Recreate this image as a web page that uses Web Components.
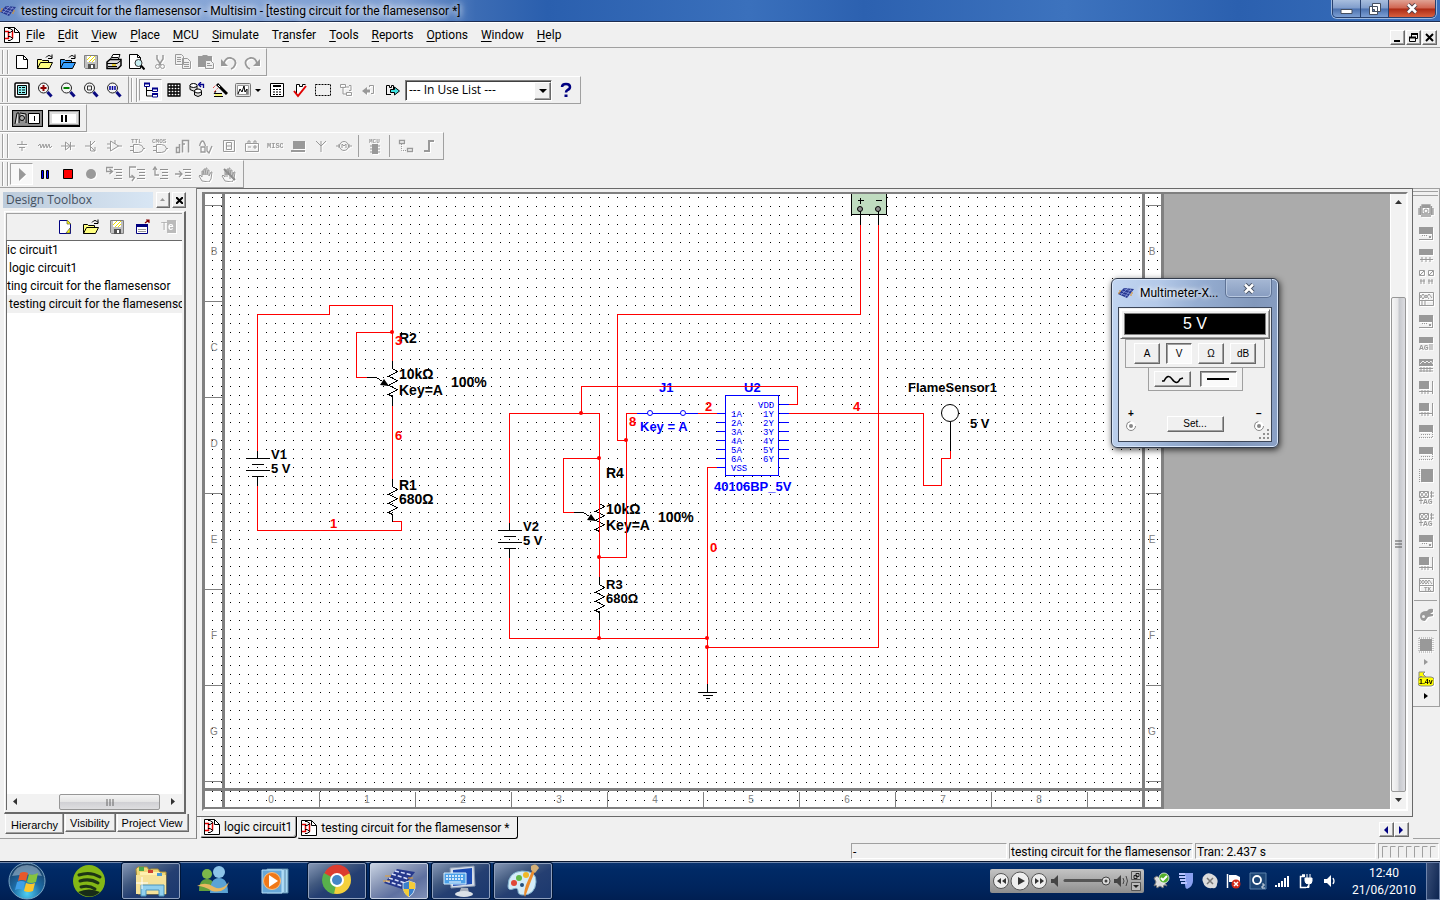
<!DOCTYPE html>
<html lang="en">
<head>
<meta charset="utf-8">
<title>testing circuit for the flamesensor - Multisim</title>
<style>
	html, body { height: 100%; margin: 0; }
	body {
		display: flex;  flex-direction: column;
		background: #f0f0f0;
		color: #000;
		font: 12px/16px Roboto, "Liberation Sans", sans-serif;
		overflow: hidden;
	}
	main { display: flex;  flex: 1;  min-height: 0; }
	.toolbars { display: flex;  flex-direction: column; }
	.toolbars > div { display: flex; }
	.documents { display: flex;  flex-direction: column;  flex: 1;  min-width: 0;  border-left: 1px solid #808080; }
</style>
</head>
<body>

<title-bar>testing circuit for the flamesensor - Multisim - [testing circuit for the flamesensor *]</title-bar>
<menu-bar></menu-bar>

<div class="toolbars">
	<div><tool-bar label="Standard" icons="new open openBlue save print preview cut- copy- paste- undo- redo-"></tool-bar></div>
	<div>
		<tool-bar label="View" icons="fit zoomIn zoomOut zoomArea zoomFull"></tool-bar>
		<tool-bar label="Main" icons="tree! grid database wizard graph&gt; calc check area back- left- right">
			<in-use-list></in-use-list>
			<tool-button icon="help" label="Help"></tool-button>
		</tool-bar>
	</div>
	<div><tool-bar label="Simulation switch"><sim-switch></sim-switch></tool-bar></div>
	<div><tool-bar label="Components" icons="source- resistor- diode- transistor- opamp- ttl- cmos- digital- mixed- indicator- power- misc- advanced- rf- motor- | mcu- | hier- bus-"></tool-bar></div>
	<div><tool-bar label="Simulation" icons="play!- pause stop record- stepInto- stepOver- stepOut- runTo- hand- handOff-"></tool-bar></div>
</div>

<main>
	<design-toolbox></design-toolbox>
	<div class="documents">
		<sheet-view>
			<circuit-sheet></circuit-sheet>
			<multimeter-window slot="floating"></multimeter-window>
		</sheet-view>
		<document-tabs></document-tabs>
	</div>
	<instrument-bar></instrument-bar>
</main>

<status-bar></status-bar>
<task-bar></task-bar>

<script>

/* Drawings for the 16x16 icons. */
const folder = (fill) => `<path d="M.5 14.500v-9h4l1 1h6v2M.5 14.500l3-6h12l-3 6z" fill="${fill}" stroke="#000"/><path d="M9 3.500q3-4 6 0m0-3v4h-4" fill="none" stroke="#000"/>`;
const lens = (inner) => `<circle cx="6.500" cy="6" r="5" fill="#f4f4f4" stroke="#222"/><path d="M10.500 10l4 4.500" stroke="#0a0a80" stroke-width="3"/>${inner}`;
const lines = `<path d="M8 3.500h8M10 6.500h6M10 9.500h6M8 12.500h8" stroke="#909090"/>`;
const gate = `<path d="M4.500 6.500h5q4 0 5 4-1 4-5 4h-5zM1 8.500h3M1 12.500h3M14 10.500h2" fill="none" stroke="#999"/>`;
const hand = `<path d="M4 15L1 10l1-1 2 2V5h1v4l1-6h1v6l1-7h1v7l1-5h1v6l2-4h1l-1 7-2 3z" fill="#f6f6f6" stroke="#999"/>`;
const sheetIcon = `<path d="M.5 .5h10l5 5v10h-15z" fill="#fff" stroke="#000"/><path d="M10.500 .5v5h5" fill="none" stroke="#000"/><path d="M1 4.500h3.500v7H1M8.500 3.500v8" fill="none" stroke="#e00000" stroke-width="1.500"/><path d="M4 1.500h2l3 2-3 2H4M4 9.500h2l3 2-3 2H4" fill="none" stroke="#000"/>`;
const logo = `<path d="M0 9l6-6 10 1-7 9z" fill="#25368f"/><path d="M2 8l8 3M4 6l8 3M6 4l8 2M10 3L3 10M13 4l-6 8" stroke="#8fa0e0" stroke-width=".7"/><path d="M0 8h2M1 6h2M13 8h2M12 10h2" stroke="#e09020"/>`;

const ICONS = {
	logo: logo,
	sheet: sheetIcon,
	new: `<path d="M2.500 1.500h7l4 4v9h-11z" fill="#fff" stroke="#000"/><path d="M9.500 1.500v4h4" fill="none" stroke="#000"/>`,
	newYellow: `<path d="M2.500 1.500h8l3 3v10h-11z" fill="#fff" stroke="#000080"/><path d="M10 1v4h4M13 9v5H9z" fill="#ff0" stroke="#555" stroke-width=".7"/>`,
	open: folder('#ffff80'),
	openBlue: folder('#38a0ff'),
	save: `<path d="M1.500 1.500h13v13h-12l-1-1z" fill="#c0c0c0" stroke="#808080"/><path d="M4 2h8v6H4z" fill="#fff"/><path d="M4 6l4-4M6 8l6-6M9 8l3-3" stroke="#f0e000"/><path d="M5 10h7v5H5z" fill="#555"/><path d="M8 11h2v3H8z" fill="#fff"/>`,
	print: `<path d="M4 6l3-5.500h7L12 6" fill="#fff" stroke="#000"/><path d="M6 3.500h6" stroke="#000"/><path d="M1 8l3-2.500h11v6l-3 3H1z" fill="#ddd" stroke="#000" stroke-width="1.500"/><path d="M1 9.500h10l4-3M2 12.500h9" fill="none" stroke="#000"/><path d="M6 11h4" stroke="#e0c000" stroke-width="1.500"/>`,
	preview: `<path d="M.5 .5h8l3 3v11h-11z" fill="#fff" stroke="#000"/><path d="M8.500 .5v3h3" fill="none" stroke="#000"/><circle cx="9.500" cy="9" r="3.500" fill="#c8eef2" stroke="#333"/><path d="M12 11.500l3.500 4" stroke="#000" stroke-width="2"/>`,
	cut: `<path d="M5 1v4l4 6M11 1v4L7 11" fill="none" stroke="#999" stroke-width="1.500"/><circle cx="5.500" cy="12.500" r="2" fill="none" stroke="#999"/><circle cx="10.500" cy="12.500" r="2" fill="none" stroke="#999"/>`,
	copy: `<path d="M.5 .5h6l2 2v8h-8z M7.500 4.500h5l3 3v7h-8z" fill="#f0f0f0" stroke="#999"/><path d="M2 3.500h4M2 5.500h4M2 7.500h4M9 8.500h5M9 10.500h5M9 12.500h5" stroke="#999"/>`,
	paste: `<path d="M0 2h4l1-1h4l1 1h4v11H0z" fill="#999"/><path d="M7.500 6.500h5l3 3v5h-8z" fill="#f0f0f0" stroke="#999"/><path d="M9 9.500h3M9 11.500h5" stroke="#999"/>`,
	undo: `<path d="M3 9Q5 3 10 4q6 2 4 7-1 3-4 4" fill="none" stroke="#999" stroke-width="1.800"/><path d="M0 5v7h7z" fill="#999"/>`,
	redo: `<path d="M13 9Q11 3 6 4 0 6 2 11q1 3 4 4" fill="none" stroke="#999" stroke-width="1.800"/><path d="M16 5v7H9z" fill="#999"/>`,
	fit: `<rect x="1" y="1" width="14" height="14" rx="1" fill="#fff" stroke="#000" stroke-width="1.500"/><path d="M3.500 3.500h9v9h-9z" fill="#8ef0f0" stroke="#000"/><path d="M5 5.500h2M8 5.500h3M5 8h2M8 8h3M5 10.500h2M8 10.500h3" stroke="#000"/>`,
	zoomIn: lens('<path d="M3.500 6h6M6.500 3v6" stroke="#900000" stroke-width="2"/>'),
	zoomOut: lens('<path d="M3.500 6h6" stroke="#008000" stroke-width="2"/>'),
	zoomArea: lens('<path d="M4.500 4h4v4h-4z" fill="none" stroke="#333"/>'),
	zoomFull: lens('<path d="M4 4v4M6.500 4v4M9 4v4" stroke="#0000a0" stroke-width="1.500"/>'),
	tree: `<path d="M3.500 5v9h6M3.500 8.500h6" fill="none" stroke="#000"/><path d="M1.500 1.500h5v3h-5zM9.500 6.500h5v3h-5zM9.500 12h5v3h-5z" fill="#fff" stroke="#00008b"/><path d="M1 1.500h6M9 6.500h6M9 12h6" stroke="#00008b" stroke-width="2"/>`,
	grid: `<path d="M2 2h12v12H2z" fill="#fff"/><path d="M1.500 2h13M1.500 5h13M1.500 8h13M1.500 11h13M1.500 14h13M2 2v12M5 2v12M8 2v12M11 2v12M14 2v12" stroke="#000" stroke-width="1.300"/>`,
	database: `<path d="M1 3.500v4q3.500 3 7 0v-4M5.500 9v4q3.500 3 7 0V9" fill="#ddd" stroke="#000"/><ellipse cx="4.500" cy="3.500" rx="3.500" ry="2" fill="#fff" stroke="#000"/><ellipse cx="9" cy="9" rx="3.500" ry="2" fill="#fff" stroke="#000"/><path d="M14.500 6V2.500h-4M12 0L9.500 2.500 12 5" fill="none" stroke="#00008b" stroke-width="1.300"/>`,
	wizard: `<path d="M5 2l10 10" stroke="#000" stroke-width="3"/><path d="M6 3l2 2" stroke="#fff"/><path d="M1 6l3-3M2 10l4-4" stroke="#d00" stroke-dasharray="1 1"/><path d="M2 11.500h8M2 14.500h9M2 12l2-3" stroke="#000"/><path d="M3 13h7" stroke="#ff0"/>`,
	graph: `<rect x=".5" y="1.500" width="15" height="13" rx="1" fill="#e4e4e4" stroke="#777"/><path d="M2.500 3.500h11v9h-11z" fill="#fff" stroke="#999"/><path d="M3 12l2-5 2 3 2-6 1 6 2-3v5" fill="none" stroke="#000"/>`,
	calc: `<path d="M1.500 1.500h13v13h-13z" fill="#fff" stroke="#000"/><path d="M4 4h8" stroke="#000" stroke-width="2"/><path d="M4 7.500h2M7 7.500h2M10 7.500h2M4 10h2M7 10h2M10 10h2M4 12.500h2M7 12.500h2M10 12.500h2" stroke="#000"/>`,
	check: `<path d="M4.500 13V2.500h3v2h3v-2h3" fill="#fff" stroke="#000"/><path d="M2 9l4 5L14 4" fill="none" stroke="#e00000" stroke-width="2"/>`,
	area: `<path d="M.5 2.500h15v11H.5z" fill="none" stroke="#000" stroke-dasharray="2 1"/>`,
	back: `<path d="M2.500 2.500h5v3h-5zM8.500 10.500h5v3h-5zM5 6v6h3M8 5h3M11 3.500h2v5h-2" fill="none" stroke="#999"/>`,
	left: `<path d="M1 9l5-4v2.500h3v3H6V13z" fill="#999"/><path d="M8.500 5V3.500h4v8H10" fill="none" stroke="#999"/>`,
	right: `<path d="M2.500 12V3.500h3v2h2v-2h2v4M2 12.500h5" fill="none" stroke="#000"/><path d="M6.500 7.500h4V5l5 4-5 4v-2.500h-4z" fill="#40e0e0" stroke="#000"/>`,
	help: `<path d="M4 5Q4 2 8 2q4 0 4 3 0 2-2.500 3-1.500 1-1.500 2.500" fill="none" stroke="#000080" stroke-width="2.500"/><path d="M6.500 12.500h3V15h-3z" fill="#000080"/>`,
	source: `<path d="M8 3v3M3 6.500h10M5 9.500h6M8 10v3" stroke="#999"/>`,
	resistor: `<path d="M1 8l2-2 1 4 2-4 1 4 2-4 1 4 2-4 1 4 2-2" fill="none" stroke="#999"/>`,
	diode: `<path d="M1 8h14M10.500 4v8M5.500 4v8l5-4z" fill="none" stroke="#999"/>`,
	transistor: `<path d="M2 8h5M7.500 3v10M8 7l4-4M8 9l4 4M12 9v4H8" fill="none" stroke="#999"/>`,
	opamp: `<path d="M4.500 3v10l8-5zM1 6h3M1 10h3M12 8h4M9 2v4" fill="none" stroke="#999"/>`,
	ttl: gate + `<text x="2" y="5" font-size="6" font-weight="bold" fill="#999">TTL</text>`,
	cmos: gate + `<text x="0" y="5" font-size="6" font-weight="bold" fill="#999">CMOS</text>`,
	digital: `<path d="M7.500 14.500v-12h6v12M4.500 9.500h-3v5h3zM4.500 14.500V6M8 6h2" fill="none" stroke="#999" stroke-width="1.500"/>`,
	mixed: `<path d="M1.500 8q3-10 6 0M3 9v5h4V9zM9 8v5l2 2 3-7" fill="none" stroke="#999" stroke-width="1.300"/>`,
	indicator: `<path d="M2.500 2.500h11v11h-11zM5.500 4.500h5v7h-5zM6 8h4" fill="none" stroke="#999"/>`,
	power: `<path d="M1.500 5.500h13v8h-13zM4 5V3h2v2M10 5V3h2v2M4 9h3M9 9h4M11 7v4" fill="none" stroke="#999"/>`,
	misc: `<text x="0" y="10" font-size="7" font-weight="bold" fill="#999">MISC</text>`,
	advanced: `<path d="M3 3h12v8H3zM1 12h14v2H1z" fill="#999"/>`,
	rf: `<path d="M8 14V8L3 3M8 8V3M8 8l5-5" fill="none" stroke="#999"/>`,
	motor: `<circle cx="8" cy="8" r="4.500" fill="none" stroke="#999"/><path d="M0 8h3M13 8h3M6 10V6l2 2 2-2v4M3 6v4M13 6v4" fill="none" stroke="#999"/>`,
	mcu: `<text x="2" y="5" font-size="6" font-weight="bold" fill="#999">MCU</text><path d="M5 6h6v10H5z" fill="#999"/><path d="M3 8h10M3 11h10M3 14h10" stroke="#999"/>`,
	hier: `<path d="M1.500 2.500h5v3h-5zM9.500 10.500h5v3h-5z" fill="none" stroke="#999" stroke-width="1.300"/><path d="M3.500 6v6.500h6" fill="none" stroke="#999" stroke-dasharray="1 1"/>`,
	bus: `<path d="M3 13h5V3h5" fill="none" stroke="#999" stroke-width="2"/>`,
	play: `<path d="M5 2v13l7-6.500z" fill="#999"/>`,
	pause: `<path d="M4.500 4.500h2v8h-2zM9.500 4.500h2v8h-2z" fill="#00f" stroke="#000"/>`,
	stop: `<path d="M3.500 3.500h9v9h-9z" fill="#f00" stroke="#000"/>`,
	record: `<circle cx="8" cy="8" r="5" fill="#999"/>`,
	stepInto: lines + `<path d="M7 1.500H.5v4H6M3.500 3l3 2.500-3 2.500" fill="none" stroke="#999" stroke-width="1.300"/>`,
	stepOver: lines + `<path d="M7 1H.5v10H5M2.500 9l3 2.500L3 15" fill="none" stroke="#999" stroke-width="1.300"/>`,
	stepOut: lines + `<path d="M7 9H3V2M1 4l2-3 2 3" fill="none" stroke="#999" stroke-width="1.300"/>`,
	runTo: lines + `<path d="M0 8h7M4 5l3 3-3 3" fill="none" stroke="#999" stroke-width="1.300"/>`,
	hand: hand,
	handOff: hand + `<path d="M3 3l11 11" stroke="#888" stroke-width="2"/><path d="M6 4v7M9 4v9M12 6v7" stroke="#999"/>`,
	export: `<path d="M1.500 5.500h11v9h-11z" fill="#fff" stroke="#000080"/><path d="M1 5h12v3H1z" fill="#000080"/><path d="M3 10.500h8M3 12.500h8" stroke="#999"/><path d="M10 4l4-3M11 1h3v3" fill="none" stroke="#800000" stroke-width="1.200"/>`,
	rename: `<path d="M6 1h9v13H6z" fill="#bbb"/><text x="0" y="11" font-size="10" fill="#aaa" font-family="Liberation Sans">T</text><text x="7" y="11" font-size="10" font-weight="bold" fill="#fff" font-family="Liberation Sans">e</text>`,
	/* Instruments */
	meter: `<path d="M4 2h8v9H4zM2.500 3v9M13.500 3v9M1 5v7M15 5v7M3 13h10" fill="none" stroke="#999" stroke-width="1.300"/><path d="M4 2h8v3H4z" fill="#999"/><circle cx="8" cy="8" r="2" fill="none" stroke="#999"/>`,
	scope: `<path d="M1 2h14v7H1z" fill="#999"/><path d="M3 11.500h10M1 14.500h14M14.500 9v6" stroke="#999" stroke-dasharray="1 1"/>`,
	scopeKnob: `<path d="M1 2h14v7H1z" fill="#999"/><path d="M4 10.500h6" stroke="#999" stroke-dasharray="1 1"/><path d="M1 14.500h14M14.500 9v6M11 11l2 2M13 11l-2 2" stroke="#999"/>`,
	scope4: `<path d="M1 2h14v6H1z" fill="#999"/><path d="M4 10v5M8 10v5M12 10v5M2 12.500h13" stroke="#999"/>`,
	quad: `<path d="M1.500 1.500h5v5h-5zM10.500 1.500h5v5h-5zM2 12h5M10 12h5M3 10v5M6 10v5M11 10v5M14 10v5M2 6l4-4M11 6l4-4" fill="none" stroke="#999"/>`,
	bode: `<path d="M1.500 1.500h14v13h-14z" fill="none" stroke="#999"/><path d="M2 7l3-4 3 4 3-4 3 4M2 4l3 4 3-4 3 4M2 9.500h13M4 10v4M7 10v4" fill="none" stroke="#999"/>`,
	words: `<path d="M1 2h14v7H1z" fill="#999"/><path d="M2 7l3-3 2 2 2-2 2 2 2-2 2 3" fill="none" stroke="#f0f0f0"/><path d="M1 11.500h14M1 14h14M3 10v5M6 10v5M9 10v5M12 10v5" stroke="#999"/>`,
	ag: `<path d="M1 2h14v6H1z" fill="#999"/><text x="1" y="15" font-size="8" font-weight="bold" fill="#999">AG</text><path d="M12 9v6M14 9v6" stroke="#999"/>`,
	side: `<path d="M1 2h10v8H1z" fill="#999"/><path d="M1 12.500h14M14.500 2v13M4 11v4M7 11v4M10 11v4" stroke="#999"/>`,
	square: `<path d="M3 2h12v13H3z" fill="#999"/><path d="M1.500 2v13" stroke="#999" stroke-dasharray="1 1"/>`,
	agBode: `<path d="M1.500 2.500h9v6h-9zM2 8l4-5 4 5M2 3l4 5 4-5M12 4h4M12 7h4M13.500 2v7" fill="none" stroke="#999"/><text x="5" y="15" font-size="8" font-weight="bold" fill="#999">AG</text><path d="M1 11.500h4M3 9v6" stroke="#999"/>`,
	tk: `<path d="M1.500 1.500h14v13h-14zM2 7l3-4 3 4 3-4 3 4M2 3l3 4 3-4 3 4M2 8.500h13" fill="none" stroke="#999"/><text x="6" y="14" font-size="6" font-weight="bold" fill="#999">TK</text>`,
	leaf: `<path d="M15 2q-4-1-6 2-7 0-7 5 0 5 5 5l3-4 5-1V7h-3l3-2z" fill="#999"/><circle cx="5.500" cy="9.500" r="1.500" fill="#f0f0f0"/>`,
	chip: `<path d="M2 2h12v12H2z" fill="#999"/><path d="M1 1v14M15 1v14M1 1h14M1 15h14" stroke="#999" stroke-dasharray="1 1"/>`,
	probe: `<path d="M1 1h6L5 3l4 4-2 2-4-4-2 2z" fill="#ff0" stroke="#888"/><rect x="0" y="6" width="16" height="9" rx="3" fill="#ff0" stroke="#888"/><text x="1" y="13" font-size="7" font-weight="bold" fill="#000" font-family="Liberation Sans">1.4v</text>`
};

class UIElement extends HTMLElement {
	connectedCallback() {
		if (this.shadowRoot) return;
		let templateEl = document.createElement('template');
		templateEl.innerHTML = `<style>
			:host, * { box-sizing: border-box; }
			button { font: inherit; color: inherit; padding: 0; border: 0; background: none; }
			svg { display: block; }
			.bevel { background: #f0f0f0; border: 1px solid; border-color: #fff #696969 #696969 #fff; box-shadow: inset -1px -1px #a0a0a0; }
		</style>` + this.render();
		this.attachShadow({ mode: 'open' }).appendChild(templateEl.content.cloneNode(true));
	}
}

class UIIcon extends UIElement {
	render() {
		let size = this.getAttribute('size') || 16;
		return `
			<style>:host { display: block; } svg { font-family: "Liberation Mono", monospace; }</style>
			<svg width="${size}" height="${size}" viewBox="0 0 16 16" aria-hidden="true">${ICONS[this.getAttribute('name')]}</svg>`;
	}
}
customElements.define('ui-icon', UIIcon);

class ToolButton extends UIElement {
	render() {
		let icon = this.getAttribute('icon');
		return `
			<style>
				:host { display: block; }
				button { display: flex; align-items: center; justify-content: center; width: 23px; height: 22px; }
				:host([drop]) button { width: 34px; gap: 4px; }
				:host([disabled]) ui-icon { filter: drop-shadow(1px 1px 0 #fff); }
				:host([pressed]) button { background: #f8f8f8; border: 1px solid; border-color: #a0a0a0 #fff #fff #a0a0a0; }
				i { border: 3px solid transparent; border-top-color: #000; border-bottom: 0; }
			</style>
			<button type="button" aria-label="${this.getAttribute('label') || icon}">
				<ui-icon name="${icon}"></ui-icon>${this.hasAttribute('drop') ? '<i></i>' : ''}
			</button>`;
	}
}
customElements.define('tool-button', ToolButton);

// Suffixes in the icons attribute: "-" disabled, "!" pressed, ">" has a drop-down arrow.
class ToolBar extends UIElement {
	render() {
		let icons = (this.getAttribute('icons') || '').split(' ').filter(Boolean);
		let buttons = icons.map(icon => {
			if (icon == '|') return '<hr>';
			let name = icon.replace(/[-!>]/g, '');
			return `<tool-button icon="${name}" ${icon.includes('-') ? 'disabled' : ''} ${icon.includes('!') ? 'pressed' : ''} ${icon.includes('>') ? 'drop' : ''}></tool-button>`;
		}).join('');
		return `
			<style>
				:host { display: block; }
				.bar {
					display: flex;  align-items: center;
					height: 28px;  padding: 0 2px 0 2px;
					border: 1px solid;  border-color: #fff #a0a0a0 #a0a0a0 #fff;  border-left-width: 0;
				}
				.grip { width: 6px; height: 24px; margin-right: 2px; border: solid #a0a0a0; border-width: 0 1px; box-shadow: inset 1px 0 #fff, 1px 0 #fff; }
				hr { width: 1px; height: 22px; margin: 0 4px 0 3px; border: 0; background: #a0a0a0; }
				slot { display: flex; align-items: center; margin-right: 1px; }
			</style>
			<div class="bar" role="toolbar" aria-label="${this.getAttribute('label')}">
				<span class="grip"></span>${buttons}<slot></slot>
			</div>`;
	}
}
customElements.define('tool-bar', ToolBar);

class InUseList extends UIElement {
	render() {
		return `
			<style>
				:host { display: block; margin: 0 2px; }
				label {
					display: flex;  width: 147px;  height: 21px;
					background: #fff;
					border: 1px solid;  border-color: #808080 #fff #fff #808080;
					box-shadow: inset 1px 1px #404040;
				}
				select {
					flex: 1;  min-width: 0;  padding: 0 0 0 3px;
					appearance: none;  border: 0;  background: none;  color: #000;
					font: 12px/18px "Open Sans", sans-serif;
				}
				span { display: flex; align-items: center; justify-content: center; width: 17px; margin: 1px 0 0; }
				i { border: 4px solid transparent; border-top-color: #000; border-bottom: 0; }
			</style>
			<label>
				<select aria-label="In use list"><option>--- In Use List ---</option></select>
				<span class="bevel"><i></i></span>
			</label>`;
	}
}
customElements.define('in-use-list', InUseList);

class SimSwitch extends UIElement {
	render() {
		return `
			<style>
				:host { display: flex; gap: 5px; padding: 0 3px 0 2px; }
				button { width: 31px; height: 17px; padding: 1px; background: #808080; border: 1px solid #000; }
				button + button { width: 32px; border-width: 1px 1px 2px; background: #a0a0a0; }
			</style>
			<button type="button" aria-label="Run"><svg width="27" height="13" viewBox="0 0 27 13">
				<path d="M0 0h27v13H0z" fill="#909090"/><path d="M14.500 1.500h11v10h-11z" fill="#fff" stroke="#000"/><path d="M1 12L3 1h2v10M6 1l6 1v9" fill="#d8d8d8" stroke="#000"/><circle cx="8" cy="6" r="2.500" fill="#aaa" stroke="#000"/><path d="M20.500 4v5" stroke="#000"/>
			</svg></button>
			<button type="button" aria-label="Pause"><svg width="28" height="12" viewBox="0 0 28 12"><path d="M0 0h28v12H0z" fill="#ddd"/><path d="M2 2h24v9H2z" fill="#fff"/><path d="M12 3v7M16 3v7" stroke="#000" stroke-width="2"/></svg></button>`;
	}
}
customElements.define('sim-switch', SimSwitch);

class TitleBar extends UIElement {
	render() {
		return `
			<style>
				:host {
					display: flex;  align-items: flex-start;  height: 22px;
					background: linear-gradient(90deg, #6b8fc8, #8aa8d8 8%, #7f9fd2 28%, #3c6cb4 33%, #2a5fae 38%, #3a70bc 52%, #2c61b0 60%, #3d73be 74%, #2b60af 86%, #3a70bc);
					border-bottom: 1px solid #1c2c50;
				}
				ui-icon { margin: 3px 5px 0 0; }
				h1 { flex: 1; margin: 0; padding-top: 2px; font: inherit; line-height: 18px; text-shadow: 0 0 6px #fff, 0 0 8px #fff; }
				.controls { display: flex; margin-right: 4px; height: 18px; border: 1px solid #27406e; border-top: 0; border-radius: 0 0 5px 5px; box-shadow: 0 0 0 1px #9db9e0; overflow: hidden; }
				button { display: flex; align-items: center; justify-content: center; width: 28px; background: linear-gradient(#a8bede, #7f9ccb 48%, #4a70ae 52%, #7c9fd4); border-right: 1px solid #27406e; }
				button:last-child { width: 46px; background: linear-gradient(#e0a294, #d06450 48%, #ac2a14 52%, #d8603e); border: 0; }
			</style>
			<ui-icon name="logo"></ui-icon>
			<h1><slot></slot></h1>
			<div class="controls">
				<button type="button" aria-label="Minimize"><svg width="13" height="12"><path d="M1 6.500h11v4H1z" fill="#fff" stroke="#444e60"/></svg></button>
				<button type="button" aria-label="Restore"><svg width="12" height="12"><path d="M3.500 .5h8v8h-8zM.5 3.500h8v8h-8z" fill="#fff" stroke="#444e60"/><path d="M3.500 6.500h2v2h-2z" fill="#6b89ba" stroke="#444e60"/></svg></button>
				<button type="button" aria-label="Close"><svg width="12" height="11"><path d="M2 1.500l8 8M10 1.500l-8 8" stroke="#50404a" stroke-width="4.500"/><path d="M2 1.500l8 8M10 1.500l-8 8" stroke="#fff" stroke-width="2.500"/></svg></button>
			</div>`;
	}
}
customElements.define('title-bar', TitleBar);

class MenuBar extends UIElement {
	render() {
		// The "&" stands before the access key.
		let items = ['&File', '&Edit', '&View', '&Place', '&MCU', '&Simulate', 'Tr&ansfer', '&Tools', '&Reports', '&Options', '&Window', '&Help'];
		return `
			<style>
				:host { display: flex; align-items: center; height: 26px; padding: 0 3px 0 4px; border-top: 1px solid #fff; border-bottom: 1px solid #a0a0a0; }
				nav { display: flex; gap: 13px; flex: 1; margin-left: 6px; }
				u { text-underline-offset: 2px; }
				.controls { display: flex; gap: 1px; padding-top: 4px; }
				.controls button { display: flex; align-items: center; justify-content: center; width: 15px; height: 15px; }
			</style>
			<ui-icon name="sheet"></ui-icon>
			<nav>${items.map(t => `<button type="button">${t.replace(/&(.)/, '<u>$1</u>')}</button>`).join('')}</nav>
			<div class="controls">
				<button class="bevel" type="button" aria-label="Minimize"><svg width="9" height="9"><path d="M1 8h6" stroke="#000" stroke-width="2"/></svg></button>
				<button class="bevel" type="button" aria-label="Restore"><svg width="9" height="9"><path d="M2.500 4V1.500h6v4H7M.5 4.500h6v4h-6z" fill="none" stroke="#000"/><path d="M2 1h7M0 4.500h7" stroke="#000" stroke-width="2"/></svg></button>
				<button class="bevel" type="button" aria-label="Close"><svg width="9" height="9"><path d="M1 1l7 7M8 1L1 8" stroke="#000" stroke-width="2"/></svg></button>
			</div>`;
	}
}
customElements.define('menu-bar', MenuBar);

class DesignToolbox extends UIElement {
	render() {
		return `
			<style>
				:host { display: flex; flex-direction: column; width: 196px; padding: 4px 10px 3px 3px; border-bottom: 1px solid #a0a0a0; }
				header { display: flex; gap: 2px; height: 16px; }
				h2 { flex: 1; margin: 0 1px 0 0; padding-left: 3px; font: 12px/16px "Open Sans", sans-serif; color: #44505f; background: linear-gradient(90deg, #bccbdb, #d8e6f4); }
				header button { width: 14px; display: flex; align-items: center; justify-content: center; }
				.panel { display: flex; flex-direction: column; flex: 1; min-height: 0; margin: 3px 0 0 1px; padding: 1px 2px 2px 1px; border: solid; border-width: 1px 2px 2px 1px; border-color: #fff #696969 #696969 #fff; }
				.tools { display: flex; justify-content: flex-end; gap: 3px; height: 27px; padding: 2px 2px 0 0; border: solid #a0a0a0; border-width: 1px 0 0 1px; }
				.tree { display: flex; flex-direction: column; flex: 1; min-height: 0; background: #fff; border: solid #696969; border-width: 1px 0 0 1px; }
				ul { flex: 1; margin: 0; padding: 0; list-style: none; overflow: hidden; white-space: nowrap; }
				li { height: 18px; line-height: 18px; }
				li:nth-child(even) { padding-left: 2px; }
				.selected { background: #f0f0f0; }
				.scroll { display: flex; height: 16px; background: #f2f2f2; }
				.scroll button { width: 17px; display: flex; align-items: center; justify-content: center; }
				.thumb { flex: 99; display: flex; align-items: center; justify-content: center; background: linear-gradient(#f4f4f4, #e4e4e4 50%, #d0d0d4 52%, #dedee0); border: 1px solid #979797; border-radius: 2px; }
				.tabs { display: flex; align-items: flex-start; gap: 1px; height: 21px; font: 11px/16px "Liberation Sans", sans-serif; margin: 0 4px 0 2px; }
				.tabs button { height: 18px; padding: 0 5px 0 4px; white-space: nowrap; border: solid #696969; border-width: 0 1px 1px; border-left-color: #fff; box-shadow: inset -1px -1px #a0a0a0; }
				.tabs button:first-child { height: 20px; padding: 3px 5px 0; }
			</style>
			<header>
				<h2>Design Toolbox</h2>
				<button class="bevel" type="button" aria-label="Collapse"><svg width="8" height="8"><path d="M1 5h5L3.500 2z" fill="#999"/></svg></button>
				<button class="bevel" type="button" aria-label="Close"><svg width="7" height="7"><path d="M0 0l7 7M7 0L0 7" stroke="#000" stroke-width="2"/></svg></button>
			</header>
			<div class="panel">
				<div class="tools">
					<tool-button icon="newYellow"></tool-button><tool-button icon="open"></tool-button><tool-button icon="save"></tool-button><tool-button icon="export"></tool-button><tool-button icon="rename" disabled></tool-button>
				</div>
				<div class="tree">
					<ul>
						<li>ic circuit1</li>
						<li>logic circuit1</li>
						<li>ting circuit for the flamesensor</li>
						<li class="selected">testing circuit for the flamesenso</li>
					</ul>
					<div class="scroll">
						<button type="button" aria-label="Scroll left"><svg width="5" height="8"><path d="M4 0v7L0 3.500z" fill="#333"/></svg></button>
						<span style="flex: 35"></span>
						<div class="thumb"><svg width="8" height="7"><path d="M1 0v7M4 0v7M7 0v7" stroke="#666"/></svg></div>
						<span style="flex: 5"></span>
						<button type="button" aria-label="Scroll right"><svg width="5" height="8"><path d="M0 0v7l4-3.500z" fill="#333"/></svg></button>
					</div>
				</div>
			</div>
			<div class="tabs"><button type="button">Hierarchy</button><button type="button">Visibility</button><button type="button">Project View</button></div>`;
	}
}
customElements.define('design-toolbox', DesignToolbox);

class SheetView extends UIElement {
	render() {
		return `
			<style>
				:host { display: flex; flex: 1; min-height: 0; padding: 3px 4px 5px 5px; border: solid #696969; border-width: 1px 1px 1px 0; }
				.view { position: relative; display: flex; flex: 1; min-width: 0; overflow: hidden; background: #ababab; border: 2px solid; border-color: #808080 #fff #fff #808080; }
				.area { flex: 1; min-width: 0; overflow: hidden; }
				.scroll { display: flex; flex-direction: column; width: 16px; background: #f2f2f2; border-left: 1px solid #fff; }
				.scroll button { height: 17px; display: flex; align-items: center; justify-content: center; }
				.thumb { flex: 494; display: flex; align-items: center; justify-content: center; background: linear-gradient(90deg, #f6f6f6, #e6e6e8 45%, #c6c8cd 55%, #dcdce0); border: 1px solid #979797; border-radius: 2px; }
			</style>
			<div class="view">
				<div class="area"><slot></slot></div>
				<div class="scroll">
					<button type="button" aria-label="Scroll up"><svg width="8" height="5"><path d="M0 4h7L3.500 0z" fill="#333"/></svg></button>
					<span style="flex: 86"></span>
					<div class="thumb"><svg width="7" height="8"><path d="M0 1h7M0 4h7M0 7h7" stroke="#555"/></svg></div>
					<button type="button" aria-label="Scroll down"><svg width="8" height="5"><path d="M0 0h7L3.500 4z" fill="#333"/></svg></button>
				</div>
				<slot name="floating"></slot>
			</div>`;
	}
}
customElements.define('sheet-view', SheetView);

class CircuitSheet extends UIElement {
	zigzag(x, y) {
		return `M${x} ${y}l5 3-9 5 9 4-9 5 9 4-9 5 4 2`;
	}

	battery(x, y) {
		return `M${x} ${y - 8}v8M${x - 12} ${y}h24M${x - 6} ${y + 6}h12M${x - 12} ${y + 12}h24M${x - 6} ${y + 18}h12M${x} ${y + 18}v9`;
	}

	dots(points) {
		return points.map(([x, y]) => `<circle cx="${x}" cy="${y}" r="2" fill="#f00"/>`).join('');
	}

	render() {
		let rulers = '';
		'BCDEFG'.split('').forEach((letter, i) => {
			rulers += `<text x="214" y="${255 + i * 96}">${letter}</text><text x="1152" y="${255 + i * 96}">${letter}</text>`;
		});
		for (let i = 0; i < 9; i++) rulers += `<text x="${271 + i * 96}" y="803">${i}</text>`;
		let ticks = '';
		for (let y = 205; y < 790; y += 96) ticks += `M204 ${y}h18M1145 ${y}h17`;
		for (let x = 319; x < 1100; x += 96) ticks += `M${x} 791v16`;
		let pins = '';
		for (let i = 0; i < 7; i++) pins += `M716 ${413 + i * 9}h9M779 ${404 + i * 9}h9`;
		let pinText = '<text x="758" y="408">VDD</text><text x="731" y="471">VSS</text>';
		for (let i = 1; i < 7; i++) pinText += `<text x="731" y="${408 + i * 9}">${i}A</text><text x="763" y="${408 + i * 9}">${i}Y</text>`;

		return `
			<style>
				:host { display: block; }
				.lines { fill: none; stroke-width: 1; shape-rendering: crispEdges; transform: translate(.5px, .5px); }
				.label { font: bold 13px "Liberation Sans", sans-serif; }
				.large { font-size: 14px; }
				.net { fill: #f00; }
				.blue { fill: #00f; }
				.pin { font: 9px "Liberation Mono", monospace; fill: #00f; }
				.ruler { font: 10px "Liberation Sans", sans-serif; fill: #808080; text-anchor: middle; }
			</style>
			<svg width="960" height="615" viewBox="204 194 960 615">
				<defs><pattern id="dots" x="5" y="8" width="9" height="9" patternUnits="userSpaceOnUse"><rect width="1" height="1" fill="#000"/></pattern></defs>
				<rect x="204" y="194" width="960" height="615" fill="#fff"/>
				<rect x="204" y="194" width="960" height="615" fill="url(#dots)"/>
				<g class="ruler">${rulers}</g>
				<path d="M204 194h1v615h-1zM222 194h3v615h-3zM1142 194h3v615h-3zM1161 194h3v615h-3zM204 788h960v3H204zM204 807h960v2H204z" fill="#808080"/>

				<path d="M851 194h36v21h-36z" fill="#000"/><path d="M852 194h34v20h-34z" fill="#c0dcc0"/>
				<g class="label large">
					<text x="399" y="343">R2</text><text x="399" y="379">10kΩ</text><text x="399" y="395">Key=A</text><text x="451" y="387">100%</text>
					<text x="399" y="490">R1</text><text x="399" y="504">680Ω</text>
					<text x="606" y="478">R4</text><text x="606" y="514">10kΩ</text><text x="606" y="530">Key=A</text><text x="658" y="522">100%</text>
				</g>
				<g class="label">
					<text x="271" y="459">V1</text><text x="271" y="473">5 V</text>
					<text x="523" y="531">V2</text><text x="523" y="545">5 V</text>
					<text x="606" y="589">R3</text><text x="606" y="603">680Ω</text>
					<text x="908" y="392">FlameSensor1</text><text x="970" y="428">5 V</text>
				</g>
				<g class="label blue">
					<text x="659" y="392">J1</text><text x="744" y="392">U2</text><text x="640" y="431">Key = A</text><text x="714" y="491">40106BP_5V</text>
				</g>
				<g class="label net">
					<text x="395" y="345">3</text><text x="395" y="440">6</text><text x="330" y="528">1</text><text x="629" y="426">8</text>
					<text x="705" y="411">2</text><text x="853" y="411">4</text><text x="710" y="552">0</text>
				</g>
				<g class="pin">${pinText}</g>

				<g class="lines" stroke="#808080"><path d="${ticks}"/></g>
				<g class="lines" stroke="#00f"><path d="M725 395h53v80h-53z${pins}M636 413h12M652 413h29M685 413h12"/></g>
				<g class="lines" stroke="#000">
					<path d="${this.battery(257, 458)}${this.battery(509, 530)}"/>
					<path d="M392 360v8${this.zigzag(392, 368)}v9M392 478v8${this.zigzag(392, 486)}v7M599 576v8${this.zigzag(599, 584)}v7${this.zigzag(599, 503)}"/>
					<path d="M366 377h10l6 4M573 512h10l6 4"/>
					<path d="M707 683v9M698 692h18M702 695h10M705 698h4"/>
					<path d="M860 209v15M878 209v15M857 200h6M860 197v6M875 200h6M950 422v28"/>
				</g>
				<g class="lines" stroke="#f00">
					<path d="M257 450V314h72v-9h63v55M392 332h-36v45h10M392 405v73M392 521h9v9H257v-45"/>
					<path d="M509 522V413h90v163M581 413v-27h216v18h-9M599 458h-36v54h10M599 557h27V413h10M626 440h-9V314h243v-90M697 413h19"/>
					<path d="M509 557v81h198M599 619v19M716 467h-9v216M707 647h171V224M788 413h135v72h18v-27h9v-8"/>
				</g>
				<path d="M389 386l-9-1 4-6zM596 521l-9-1 4-6z" fill="#000"/>
				<circle cx="950" cy="413" r="8.500" fill="#fff" stroke="#000"/>
				<g fill="#909090" stroke="#000"><circle cx="860" cy="209" r="2.500"/><circle cx="878" cy="209" r="2.500"/></g>
				<g fill="#fff" stroke="#00f"><circle cx="650" cy="413" r="2.500"/><circle cx="683" cy="413" r="2.500"/></g>
				${this.dots([[392, 332], [581, 413], [599, 458], [626, 440], [599, 557], [599, 638], [707, 638], [707, 647]])}
			</svg>`;
	}
}
customElements.define('circuit-sheet', CircuitSheet);

class MultimeterWindow extends UIElement {
	render() {
		let jack = '<svg width="12" height="12"><circle cx="6" cy="6" r="4.500" fill="#fff" stroke="#888" stroke-dasharray="20 8"/><circle cx="6" cy="6" r="2" fill="#888"/></svg>';
		return `
			<style>
				:host {
					position: absolute;  left: 907px;  top: 84px;
					display: flex;  flex-direction: column;
					width: 168px;  padding: 0 6px 5px;
					background: linear-gradient(100deg, #c2d6f2, #b4c9e8 25%, #96aed2 45%, #8298bb 75%, #8ba1c6);
					border: 1px solid #333c4c;  border-radius: 6px;
					box-shadow: inset 0 0 0 1px #d8e6fa, 1px 2px 6px rgba(0, 0, 0, .7);
				}
				header { display: flex; align-items: flex-start; height: 28px; }
				header ui-icon { margin-top: 6px; }
				h2 { flex: 1; margin: 0 0 0 6px; padding-top: 6px; font: inherit; white-space: nowrap; text-shadow: 0 0 6px #fff, 0 0 4px #fff; }
				.close { display: flex; align-items: center; justify-content: center; width: 47px; height: 19px; border: 1px solid #5f7395; border-top: 0; border-radius: 0 0 5px 5px; background: linear-gradient(#a6b8d4, #879cc0); box-shadow: inset 0 0 0 1px #b8c8e0; }
				.body { display: flex; flex-direction: column; align-items: center; height: 135px; background: #f0f0f0; border: 1px solid #3c4658; padding: 1px; font: 10px/14px "Liberation Sans", sans-serif; }
				.display { align-self: stretch; height: 30px; padding: 3px; border: 1px solid; border-color: #fff #696969 #696969 #fff; box-shadow: inset 1px 1px #fff, inset -1px -1px #a0a0a0; }
				output { display: block; height: 22px; background: #000; color: #fff; border: 1px solid #808080; text-align: center; font-size: 16px; line-height: 20px; }
				.modes { display: flex; justify-content: center; align-items: center; gap: 6px; width: 140px; height: 29px; border: 1px solid #a0a0a0; }
				.modes button { width: 26px; height: 21px; }
				.waves { display: flex; justify-content: center; align-items: center; gap: 9px; width: 95px; height: 23px; border: 1px solid #a0a0a0; border-top: 0; }
				.waves button { width: 37px; height: 16px; display: flex; align-items: center; justify-content: center; }
				button.on { background: #fafafa; border-color: #696969 #fff #fff #696969; box-shadow: inset 1px 1px #a0a0a0; }
				.leads { display: flex; justify-content: space-between; align-items: flex-end; align-self: stretch; flex: 1; padding: 0 5px 8px; }
				.leads > span { display: flex; flex-direction: column; align-items: center; line-height: 12px; font-weight: bold; }
				.leads button { width: 57px; height: 16px; }
				.grip { position: absolute; right: 8px; bottom: 7px; }
			</style>
			<header>
				<ui-icon name="logo"></ui-icon>
				<h2>Multimeter-X...</h2>
				<button class="close" type="button" aria-label="Close"><svg width="12" height="11"><path d="M2 1.500l8 8M10 1.500l-8 8" stroke="#444e60" stroke-width="4.500"/><path d="M2 1.500l8 8M10 1.500l-8 8" stroke="#fff" stroke-width="2.500"/></svg></button>
			</header>
			<div class="body">
				<div class="display"><output>5 V</output></div>
				<div class="modes">
					<button class="bevel" type="button">A</button><button class="bevel on" type="button">V</button><button class="bevel" type="button">Ω</button><button class="bevel" type="button">dB</button>
				</div>
				<div class="waves">
					<button class="bevel" type="button" aria-label="AC"><svg width="23" height="10"><path d="M1 7h2q4-8 8-2 5 7 8 0l3-1" fill="none" stroke="#000" stroke-width="1.500"/></svg></button>
					<button class="bevel on" type="button" aria-label="DC"><svg width="23" height="8"><path d="M0 4h22" stroke="#000" stroke-width="2"/></svg></button>
				</div>
				<div class="leads"><span>+${jack}</span><button class="bevel" type="button">Set...</button><span>−${jack}</span></div>
			</div>
			<svg class="grip" width="11" height="11"><path d="M8 1h2M8 5h2M4 5h2M8 9h2M4 9h2M0 9h2" stroke="#909090" stroke-width="2"/></svg>`;
	}
}
customElements.define('multimeter-window', MultimeterWindow);

class DocumentTabs extends UIElement {
	render() {
		return `
			<style>
				:host { display: flex; align-items: flex-start; height: 22px; padding: 0 4px 0 3px; }
				.tab { display: flex; align-items: center; gap: 4px; height: 21px; padding: 0 4px 0 3px; border: solid #000; border-width: 0 1px 1px 0; border-left: 1px solid #fff; border-radius: 0 0 3px 3px; box-shadow: inset -1px -1px #a0a0a0; white-space: nowrap; }
				.tab.on { height: 22px; padding-right: 8px; box-shadow: none; }
				.arrows { display: flex; margin: 5px 0 0 auto; }
				.arrows button { display: flex; align-items: center; justify-content: center; width: 15px; height: 15px; }
			</style>
			<button class="tab" type="button"><ui-icon name="sheet"></ui-icon>logic circuit1</button>
			<button class="tab on" type="button"><ui-icon name="sheet"></ui-icon>testing circuit for the flamesensor *</button>
			<div class="arrows">
				<button class="bevel" type="button" aria-label="Previous"><svg width="5" height="8"><path d="M4 0v8L0 4z" fill="#000080"/></svg></button>
				<button class="bevel" type="button" aria-label="Next"><svg width="5" height="8"><path d="M0 0v8l4-4z" fill="#000080"/></svg></button>
			</div>`;
	}
}
customElements.define('document-tabs', DocumentTabs);

class InstrumentBar extends UIElement {
	render() {
		let names = ['meter', 'scopeKnob', 'scope4', 'quad', 'bode', 'scopeKnob', 'ag', 'words', 'side', 'side', 'scope', 'scope', 'square', 'agBode', 'agBode', 'scopeKnob', 'side', 'tk'];
		let button = name => `<button type="button" aria-label="${name}"><ui-icon name="${name}"></ui-icon></button>`;
		return `
			<style>
				:host { display: block; width: 27px; border-bottom: 1px solid #a0a0a0; }
				.bar { display: flex; flex-direction: column; align-items: center; padding: 2px 1px 4px 0; border: solid #a0a0a0; border-width: 1px 1px 1px 0; }
				.grip { width: 25px; height: 5px; border: solid #a0a0a0; border-width: 1px 0; margin-bottom: 4px; }
				button { display: flex; align-items: center; justify-content: center; width: 24px; height: 22px; }
				button ui-icon { filter: drop-shadow(1px 1px 0 #fff); }
				hr { width: 23px; height: 1px; margin: 4px 0 3px; border: 0; background: #a0a0a0; }
				.more { height: 12px; }
			</style>
			<div class="bar">
				<span class="grip"></span>
				${names.map(button).join('')}
				<hr>${button('leaf')}<hr>${button('chip')}
				<button class="more" type="button" aria-label="More"><svg width="4" height="6"><path d="M0 0v6l4-3z" fill="#999"/></svg></button>
				${button('probe')}
				<button class="more" type="button" aria-label="Probe settings"><svg width="4" height="6"><path d="M0 0v6l4-3z" fill="#000"/></svg></button>
			</div>`;
	}
}
customElements.define('instrument-bar', InstrumentBar);

class StatusBar extends UIElement {
	render() {
		return `
			<style>
				:host { display: flex; justify-content: flex-end; gap: 2px; height: 22px; padding: 4px 1px 2px 0; }
				span { width: 181px; padding-left: 1px; border: 1px solid; border-color: #a0a0a0 #fff #fff #a0a0a0; line-height: 16px; white-space: nowrap; overflow: hidden; }
				.hint { width: 156px; }
				.name { width: 184px; }
				.meter { width: 61px; padding: 2px 3px; }
			</style>
			<span class="hint">-</span><span class="name">testing circuit for the flamesensor</span><span>Tran: 2.437 s</span>
			<span class="meter"><svg width="54" height="12"><path d="${[0, 8, 16, 24, 32, 40, 48].map(x => `M${x + 5}.5 .5h-5v11`).join('')}" fill="none" stroke="#a0a0a0"/></svg></span>`;
	}
}
customElements.define('status-bar', StatusBar);

class TaskBar extends UIElement {
	render() {
		let app = (label, cls, art) => `<button class="app ${cls}" type="button" aria-label="${label}"><svg width="36" height="36" viewBox="0 0 36 36">${art}</svg></button>`;
		let tray = (label, art) => `<button type="button" aria-label="${label}"><svg width="18" height="18" viewBox="0 0 18 18">${art}</svg></button>`;
		return `
			<style>
				:host { display: flex; align-items: stretch; gap: 4px; height: 39px; border-top: 1px solid #0a1830; box-shadow: inset 0 1px #7188ac; background: linear-gradient(#0a3470, #002a66 20%, #00245c 70%, #001f52); color: #fff; }
				.start { width: 56px; display: flex; align-items: center; justify-content: center; }
				.app { display: flex; align-items: center; justify-content: center; width: 58px; margin: 1px 0; border-radius: 2px; }
				.open { border: 1px solid #8fa0bd; background: linear-gradient(150deg, #8496b4, #41597f 35%, #253f72 55%, #1b386e); box-shadow: 0 0 0 1px #001638; }
				.active { background: linear-gradient(150deg, #c8d2e2, #8593b4 40%, #5e70a0 65%, #7f90b8); border-color: #c8d2e4; }
				.player { display: flex; align-items: center; gap: 2px; width: 154px; height: 24px; margin: 7px 5px 0 auto; padding: 0 2px; background: linear-gradient(#c4c4c4, #8e8e8e); border-radius: 2px; }
				.tray { display: flex; align-items: center; gap: 6px; }
				.clock { width: 79px; text-align: center; line-height: 17px; padding: 3px 0 0 3px; }
				.clock span { display: block; }
				.desktop { width: 14px; border: 1px solid #6f84ab; background: linear-gradient(100deg, #3a4f78, #0c2450); }
			</style>
			<button class="start" type="button" aria-label="Start"><svg width="40" height="38" viewBox="0 0 40 38">
				<defs><radialGradient id="orb" cx=".5" cy=".85" r=".8"><stop offset="0" stop-color="#4fd0f4"/><stop offset=".5" stop-color="#1c6aa4"/><stop offset="1" stop-color="#1a3d63"/></radialGradient></defs>
				<circle cx="19" cy="19" r="18" fill="url(#orb)" stroke="#7ba6c4"/>
				<path d="M4 14Q8 3 19 3t15 11q-14-3-30 0z" fill="#b8cfe0" opacity=".5"/>
				<path d="M12 11q4-2 8 0l-2 8q-4-2-8 0z" fill="#e8582a"/><path d="M21 12q4 2 9-1l-2 9q-5 2-9 0z" fill="#86c440"/><path d="M9 20q4-2 8 0l-2 8q-4-2-8 0z" fill="#3f9fe8"/><path d="M18 21q5 2 9 0l-2 8q-5 2-9 0z" fill="#fcc62c"/>
			</svg></button>
			${app('Spotify', '', '<circle cx="18" cy="18" r="16" fill="#84b816"/><path d="M8 12q11-4 21 2M9 18q10-3 18 2M10 24q8-2 14 2" fill="none" stroke="#1d3515" stroke-width="3" stroke-linecap="round"/><path d="M7 29q11-5 22 0-10 9-22 0z" fill="#182c18"/>')}
			${app('Explorer', 'open', '<path d="M3 6l2-2h9l2 3 2-1h7l2 3h6v22H5z" fill="#f0d878" stroke="#a88c38"/><path d="M7 9h20v20H7z" fill="#fff0b0"/><path d="M3 12h30v19H3z" fill="#f6e29a"/><path d="M6 4h5v4H6z" fill="#4aa84a"/><path d="M15 7h5v3h-5z" fill="#d04030"/><path d="M24 10h5v3h-5z" fill="#4898d8"/><path d="M8 33V22h23v11h-5v-6H13v6z" fill="#92d0ee" stroke="#4c94bc"/><path d="M9 14v12M3 20h12" stroke="#fff"/>')}
			${app('Messenger', '', '<circle cx="12" cy="11" r="5" fill="#7cb84a"/><path d="M4 28q0-12 8-12t8 12z" fill="#62a03c"/><circle cx="24" cy="9" r="6" fill="#8cc4e8"/><path d="M15 30q0-15 9-15t9 15z" fill="#5ba3d4"/><path d="M2 23q9-5 17 1 8 4 15-5-4 12-17 9-8-5-15-5z" fill="#e8b860"/>')}
			${app('Media player', '', '<path d="M10 6h21v24H10z" fill="#a8d8f4" stroke="#5888a8"/><path d="M28 7v22" stroke="#5888a8"/><path d="M5 7h20v23H5z" fill="#68a8d8" stroke="#b8e0f8"/><circle cx="15" cy="18" r="8.500" fill="#f07818" stroke="#fbc080"/><path d="M12 12v12l9-6z" fill="#fff"/>')}
			${app('Chrome', 'open', '<circle cx="18" cy="17" r="14" fill="#f4d03c"/><path d="M18 17L5 11a14 14 0 0 1 26-1z" fill="#dc3c30"/><path d="M18 17L5 10a14 14 0 0 0 10 21z" fill="#58b04c"/><circle cx="18" cy="17" r="7" fill="#fff"/><circle cx="18" cy="17" r="5" fill="#4486c8"/>')}
			${app('Multisim', 'open active', '<path d="M3 20L16 6l18 3-13 17z" fill="#26388c"/><path d="M5 18l16 5M8 15l16 5M11 11l16 5M14 8l17 4" stroke="#d8e0fc" stroke-width="1.500" stroke-dasharray="4 2"/><path d="M2 18h7M4 13h6M27 15h5M25 19h4" stroke="#e8a030"/><path d="M22 20l6-2 6 2v5q-1 6-6 9-5-3-6-9z" fill="#3c80cc" stroke="#fff" stroke-width=".7"/><path d="M28 18l6 2v6h-6zM22 26h6v8q-5-3-6-8z" fill="#f4cc38"/>')}
			${app('Keyboard', 'open', '<path d="M7 5l24-2 1 20-24 2z" fill="#d4dce8" stroke="#8898b0"/><path d="M10 7l19-2v16l-19 2z" fill="#1c4cb4"/><path d="M18 25h7l1 5H16z" fill="#a8b0bc"/><ellipse cx="21" cy="31" rx="9" ry="3" fill="#dce2e8"/><path d="M1 10h22v11H1z" fill="#4ca0e8" stroke="#d8f0ff"/><path d="M3 13h18M3 16h18" stroke="#fff" stroke-width="1.500" stroke-dasharray="2 1"/><path d="M6 19h12" stroke="#fff"/>')}
			${app('Paint', 'open', '<path d="M3 23Q3 9 17 8q15 0 14 11-1 13-13 13-5 0-5-4t-5-2q-5 2-5-3z" fill="#d4ecf8" stroke="#80b0cc"/><circle cx="9" cy="20" r="3" fill="#e04838"/><circle cx="14" cy="15" r="3" fill="#60b848"/><circle cx="21" cy="12" r="3" fill="#f0b828"/><circle cx="17" cy="22" r="2" fill="#24507c"/><path d="M30 8l-4 10-6 16q-2-3 1-12l6-14z" fill="#ec8c2c"/><path d="M26 3q5-4 8 2l-4 5-4-3z" fill="#d4b078"/>')}
			<div class="player">
				<svg width="150" height="24" viewBox="0 0 150 24">
					<g fill="#eee" stroke="#555"><circle cx="9" cy="12" r="7.500"/><circle cx="28" cy="12" r="9"/><circle cx="47" cy="12" r="7.500"/></g>
					<path d="M9 9v6l-4-3zM14 9v6l-4-3zM26 8v8l7-4zM43 9v6l4-3zM48 9v6l4-3z" fill="#333"/>
					<path d="M59 10h3l4-4v12l-4-4h-3zM122 10h3l4-4v12l-4-4h-3z" fill="#444"/><path d="M131 9q2 3 0 6M134 7q3 5 0 10" fill="none" stroke="#444"/>
					<path d="M73 11.500h42" stroke="#555" stroke-width="3" stroke-linecap="round"/><circle cx="114" cy="12" r="4" fill="#ddd" stroke="#444"/><circle cx="114" cy="12" r="1.500" fill="#444"/>
					<path d="M139.500 2.500h9v8h-9zM139.500 13.500h9v8h-9z" fill="#bbb" stroke="#555"/><path d="M144 4.500h3v3h-3zM142 6.500h3v3h-3z" fill="none" stroke="#222"/><path d="M141 16h6l-3 3z" fill="#222"/>
				</svg>
			</div>
			<div class="tray">
				${tray('Status', '<path d="M1 6l3-2 2 2 3-3 5 2v5l-2 1 2 3-3-1-1 3-3-2-3 2-1-3-2 1 2-4z" fill="#ddd" stroke="#777"/><circle cx="11" cy="6" r="5" fill="#52b02c" stroke="#fff" stroke-width=".7"/><path d="M8 6l2 2 4-4" fill="none" stroke="#fff" stroke-width="2"/>')}
				${tray('Shield', '<path d="M8 1h8v8q0 5-6 8-2-1-2-4z" fill="#8aa0f0"/><path d="M2 2h6M2 5h7M3 8h6M4 11h6" stroke="#b8c4ff" stroke-width="2"/>')}
				${tray('Skype', '<path d="M5 2q4-2 9 2 4 4 2 8 0 5-5 4-7 1-9-6-2-5 3-8z" fill="#dcdcdc"/><path d="M6 6l6 6M12 6l-6 6" stroke="#777" stroke-width="1.500"/>')}
				${tray('Action center', '<path d="M2.500 2v14" stroke="#fff" stroke-width="1.500"/><path d="M4 3h7l4 2v6l-4-1H4z" fill="#fff"/><circle cx="11" cy="12" r="4.500" fill="#d02818"/><path d="M9 10l4 4M13 10l-4 4" stroke="#fff" stroke-width="1.500"/>')}
				${tray('O2', '<path d="M1 1h16v16H1z" fill="#1d4676" stroke="#5a80a8"/><circle cx="8" cy="8" r="4" fill="none" stroke="#fff" stroke-width="1.800"/><path d="M13 12h2v2h-2v2h3" fill="none" stroke="#fff" stroke-width=".8"/>')}
				${tray('Network', '<path d="M3 13v2M6 11v4M9 9v6M12 6v9M15 4v11" stroke="#fff" stroke-width="2"/>')}
				${tray('Power', '<path d="M9 15.500H3.500v-11H8M5 3h3" fill="none" stroke="#fff" stroke-width="1.500"/><path d="M8 6h7v3q0 3-3 3-4 0-4-3zM10 2v4M13 2v4M12 12v3.500H9" fill="#fff" stroke="#fff"/>')}
				${tray('Volume', '<path d="M3 7h3l4-4v12l-4-4H3z" fill="#fff"/><path d="M12 6q2 3 0 6" fill="none" stroke="#fff" stroke-width="1.300"/>')}
			</div>
			<div class="clock"><span>12:40</span><span>21/06/2010</span></div>
			<button class="desktop" type="button" aria-label="Show desktop"></button>`;
	}
}
customElements.define('task-bar', TaskBar);

</script>
</body>
</html>
